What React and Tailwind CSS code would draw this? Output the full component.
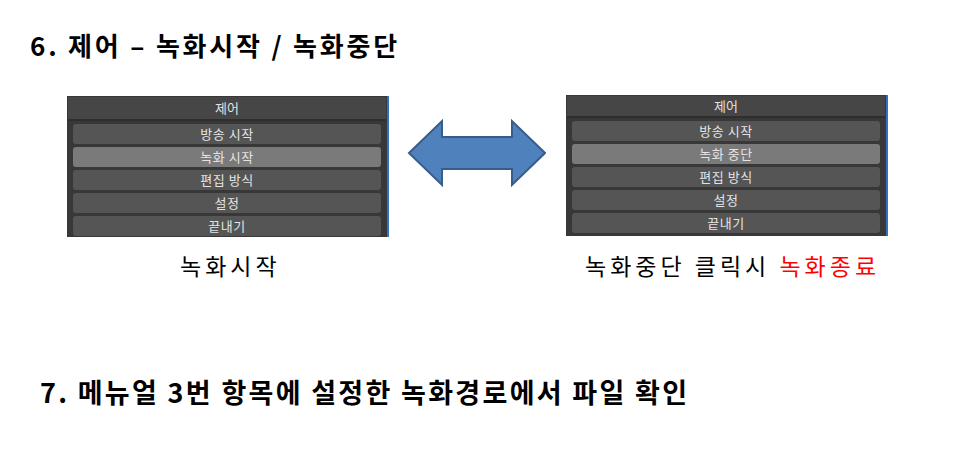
const KR = 'font-["Noto_Sans_CJK_KR","Noto_Sans",sans-serif]';

const ControlPanel = ({ items, active, headerH }) => (
  <div className="w-[322px] h-[141px] bg-[#383838] border-r-2 border-r-[#2f72c4] flex flex-col">
    <div
      className={`${headerH} mx-[1px] mt-[1px] bg-[#464646] border-b-2 border-b-[#2e2e2e] flex items-center justify-center text-[13px] text-[#e2e2e2]`}
    >
      제어
    </div>
    <div className="flex flex-col gap-[3px] px-[6px] pt-[3px]">
      {items.map((label, i) => (
        <div
          key={label}
          className={`h-[20px] rounded-[3px] flex items-center justify-center text-[13px] tracking-[0.5px] text-[#e4e4e4] ${
            i === active ? 'bg-[#7a7a7a]' : 'bg-[#555555]'
          }`}
        >
          {label}
        </div>
      ))}
    </div>
  </div>
);

const DoubleArrow = () => (
  <svg width="140" height="70" viewBox="0 0 140 70">
    <path
      d="M3 35 L36 3 L36 19 L106 19 L106 3 L139 35 L106 67 L106 51 L36 51 L36 67 Z"
      fill="#4f81bd"
      stroke="#385d8a"
      strokeWidth="2"
      strokeLinejoin="miter"
    />
  </svg>
);

export default function App() {
  return (
    <div className={`w-[978px] h-[471px] bg-white text-black ${KR}`}>
      <h1 className="pl-[30px] pt-[28px] text-[26px] font-bold leading-[34px] tracking-[2.8px]">6. 제어 – 녹화시작 / 녹화중단</h1>

      <div className="flex items-start mt-[34px]">
        <div className="ml-[67px] flex flex-col">
          <ControlPanel headerH="h-[24px]" items={['방송 시작', '녹화 시작', '편집 방식', '설정', '끝내기']} active={1} />
          <div className="pl-[113px] mt-[14px] text-[23px] leading-[28px] tracking-[4px]">녹화시작</div>
        </div>

        <div className="ml-[17px] mt-[22px]">
          <DoubleArrow />
        </div>

        <div className="ml-[20px] -mt-[1px] flex flex-col">
          <ControlPanel headerH="h-[22px]" items={['방송 시작', '녹화 중단', '편집 방식', '설정', '끝내기']} active={1} />
          <div className="pl-[19px] mt-[15px] text-[23px] leading-[28px] tracking-[4px]">
            녹화중단 클릭시 <span className="text-[#ff0000]">녹화종료</span>
          </div>
        </div>
      </div>

      <h2 className="pl-[40px] mt-[96px] text-[27px] font-bold leading-[34px] tracking-[2.3px]">7. 메뉴얼 3번 항목에 설정한 녹화경로에서 파일 확인</h2>
    </div>
  );
}
